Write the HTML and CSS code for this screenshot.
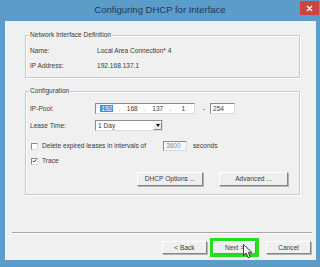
FILE: index.html
```html
<!DOCTYPE html>
<html>
<head>
<meta charset="utf-8">
<link rel="stylesheet" href="styles.css">
</head>
<body>
<div class="window">
  <div class="titlebar">
    <span class="title">Configuring DHCP for Interface</span>
    <span class="close">
      <svg width="7" height="7" viewBox="0 0 7 7"><path d="M1 1L6 6M6 1L1 6" stroke="#fff" stroke-width="1.4"/></svg>
    </span>
  </div>
  <div class="client">
    <fieldset class="group g1">
      <legend>Network Interface Definition</legend>
      <div class="rows rows1">
        <div class="row"><span class="lbl lbl1">Name:</span><span>Local Area Connection* 4</span></div>
        <div class="row"><span class="lbl lbl1">IP Address:</span><span>192.168.137.1</span></div>
      </div>
    </fieldset>
    <fieldset class="group g2">
      <legend>Configuration</legend>
      <div class="rows rows2">
        <div class="row r-ip">
          <span class="lbl">IP-Pool:</span>
          <div class="edit ipbox">
            <span class="oct"><span class="sel">192</span></span><span class="dot">.</span>
            <span class="oct">168</span><span class="dot">.</span>
            <span class="oct">137</span><span class="dot">.</span>
            <span class="oct">1</span>
          </div>
          <span class="dash">-</span>
          <div class="edit endbox">254</div>
        </div>
        <div class="row r-lease">
          <span class="lbl">Lease Time:</span>
          <div class="edit combo">
            <span class="combo-text">1 Day</span>
            <span class="combo-btn"><span class="tri"></span></span>
          </div>
        </div>
        <div class="row r-del">
          <span class="chk"></span>
          <span class="chk-text">Delete expired leases in intervals of</span>
          <div class="edit secbox">3600</div>
          <span class="secs">seconds</span>
        </div>
        <div class="row r-trace">
          <span class="chk checked">
            <svg width="6" height="6" viewBox="0 0 6 6"><path d="M0.8 2.8L2.3 4.3L5.2 1.2" fill="none" stroke="#222" stroke-width="1.1"/></svg>
          </span>
          <span class="chk-text">Trace</span>
        </div>
        <div class="row r-btns">
          <span class="btn btn-dhcp">DHCP Options ...</span>
          <span class="btn btn-adv">Advanced ...</span>
        </div>
      </div>
    </fieldset>
    <div class="sep"></div>
    <div class="footer">
      <span class="btn btn-back">&lt; Back</span>
      <span class="btn btn-next">Next &gt;</span>
      <span class="btn btn-cancel">Cancel</span>
    </div>
  </div>
  <svg class="cursor" width="11" height="15" viewBox="0 0 11 15">
    <path d="M0.5 0.5L0.5 11.5L3.2 9L5.2 13.8L7.2 13L5.3 8.3L8.8 8.3Z" fill="#fff" stroke="#111" stroke-width="0.8" stroke-linejoin="round"/>
  </svg>
</div>
</body>
</html>
```

FILE: styles.css
```css
html, body {
  margin: 0;
  padding: 0;
}
body {
  font-family: "Liberation Sans", Arial, sans-serif;
  font-size: 6.6px;
  color: #3a3a3a;
  background: #5c9cc9;
}
.window {
  position: relative;
  width: 320px;
  height: 267px;
  background: #5c9cc9;
  display: flex;
  flex-direction: column;
  box-sizing: border-box;
}
.titlebar {
  height: 21px;
  flex: none;
  display: grid;
  grid-template-columns: 1fr auto 1fr;
  align-items: start;
}
.title {
  grid-column: 2;
  font-size: 9.5px;
  line-height: 20px;
  color: #1f3853;
  white-space: nowrap;
}
.close {
  grid-column: 3;
  justify-self: end;
  width: 19px;
  height: 14px;
  margin: 1px 1px 0 0;
  background: #c8463c;
  display: flex;
  align-items: center;
  justify-content: center;
}
.client {
  flex: 1;
  margin: 0 4px 7px 5px;
  background: #f0f0f0;
  display: flex;
  flex-direction: column;
  box-shadow: inset 1px 0 0 #fafafa;
}
.group {
  margin: 0 16px 0 20px;
  border: 1px solid #c9c9c9;
  box-shadow: inset 1px 1px 0 #ffffff, 1px 1px 0 #ffffff;
  min-width: 0;
}
.group legend {
  padding: 0 1px;
  margin-left: -1px;
  line-height: 8px;
  background: #f0f0f0;
}
.g1 {
  margin-top: 10px;
  padding: 8px 4px 7px 4px;
}
.g2 {
  margin-top: 9px;
  padding: 8px 11px 8px 4px;
}
.rows {
  display: flex;
  flex-direction: column;
}
.rows1 {
  gap: 7px;
}
.row {
  display: flex;
  align-items: center;
  line-height: 8px;
  white-space: nowrap;
}
.lbl {
  width: 65px;
  flex: none;
}
.lbl1 {
  width: 67px;
}
.edit {
  box-sizing: border-box;
  height: 11px;
  background: #ffffff;
  border-top: 1px solid #8c8c8c;
  border-left: 1px solid #8c8c8c;
  border-bottom: 1px solid #dadada;
  border-right: 1px solid #dadada;
  display: flex;
  align-items: center;
}
.ipbox {
  width: 100px;
}
.oct {
  flex: 1;
  text-align: center;
}
.sel {
  background: #3d8ee6;
  color: #ffffff;
  padding: 0 1px;
}
.dot {
  width: 4px;
  text-align: center;
  color: #777;
}
.dash {
  margin-left: 8px;
  width: 7px;
}
.endbox {
  width: 25px;
  padding-left: 2px;
}
.r-lease {
  margin-top: 6px;
}
.combo {
  width: 68px;
  justify-content: space-between;
  padding-left: 2px;
}
.combo-btn {
  width: 9px;
  height: 9px;
  box-sizing: border-box;
  background: #ececec;
  border-top: 1px solid #fff;
  border-left: 1px solid #fff;
  border-right: 1px solid #8a8a8a;
  border-bottom: 1px solid #8a8a8a;
  display: flex;
  align-items: center;
  justify-content: center;
}
.tri {
  width: 0;
  height: 0;
  border-left: 2.5px solid transparent;
  border-right: 2.5px solid transparent;
  border-top: 3px solid #111;
}
.r-del {
  margin-top: 10px;
  height: 10px;
}
.chk {
  box-sizing: border-box;
  width: 7px;
  height: 7px;
  margin-left: 1px;
  margin-right: 4px;
  background: #ffffff;
  border-top: 1px solid #8a8a8a;
  border-left: 1px solid #8a8a8a;
  border-bottom: 1px solid #dcdcdc;
  border-right: 1px solid #dcdcdc;
  display: flex;
  align-items: center;
  justify-content: center;
  flex: none;
}
.r-del .chk-text {
  width: 121px;
}
.secbox {
  width: 24px;
  height: 10px;
  padding-left: 2px;
  color: #8e8e8e;
  background: #f6f6f6;
}
.secs {
  margin-left: 6px;
}
.r-trace {
  margin-top: 6px;
}
.r-btns {
  margin-top: 7px;
  justify-content: flex-end;
  gap: 16px;
}
.btn {
  box-sizing: border-box;
  height: 14px;
  background: #efefef;
  border-top: 1px solid #ffffff;
  border-left: 1px solid #ffffff;
  border-right: 1px solid #858585;
  border-bottom: 1px solid #858585;
  box-shadow: 1px 1px 0 #b4b4b4;
  display: flex;
  align-items: center;
  justify-content: center;
  color: #3a3a3a;
  white-space: nowrap;
}
.btn-dhcp {
  width: 66px;
}
.btn-adv {
  width: 69px;
}
.sep {
  margin: 37px 4px 0 7px;
  height: 1px;
  background: #a6a6a6;
  border-bottom: 1px solid #ffffff;
}
.footer {
  margin-top: 7px;
  padding-right: 5px;
  display: flex;
  justify-content: flex-end;
}
.btn-back {
  width: 45px;
  height: 13px;
}
.btn-next {
  width: 43px;
  height: 13px;
  margin-left: 6px;
  outline: 3px solid #22e01e;
}
.btn-cancel {
  width: 45px;
  height: 13px;
  margin-left: 10px;
}
.cursor {
  position: absolute;
  left: 243px;
  top: 244px;
}
```
